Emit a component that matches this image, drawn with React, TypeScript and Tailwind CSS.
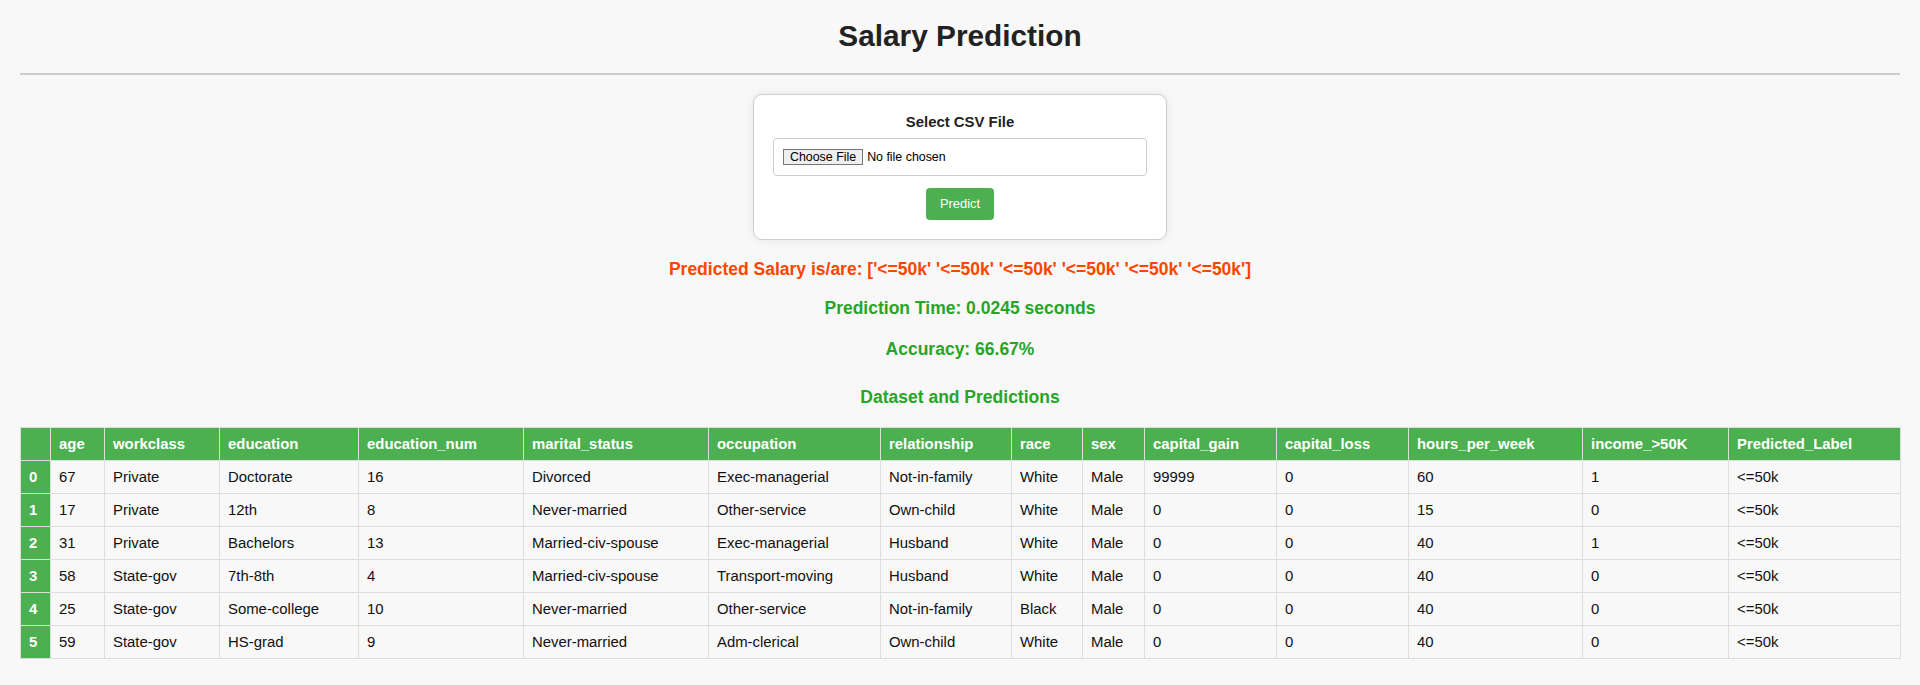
import React from 'react';

const columns = [
    { name: '', width: 'w-[30px]' },
    { name: 'age', width: 'w-[54px]' },
    { name: 'workclass', width: 'w-[115px]' },
    { name: 'education', width: 'w-[139px]' },
    { name: 'education_num', width: 'w-[165px]' },
    { name: 'marital_status', width: 'w-[185px]' },
    { name: 'occupation', width: 'w-[172px]' },
    { name: 'relationship', width: 'w-[131px]' },
    { name: 'race', width: 'w-[71px]' },
    { name: 'sex', width: 'w-[62px]' },
    { name: 'capital_gain', width: 'w-[132px]' },
    { name: 'capital_loss', width: 'w-[132px]' },
    { name: 'hours_per_week', width: 'w-[174px]' },
    { name: 'income_>50K', width: 'w-[146px]' },
    { name: 'Predicted_Label', width: 'w-[172px]' },
];

const rows = [
    ['67', 'Private', 'Doctorate', '16', 'Divorced', 'Exec-managerial', 'Not-in-family', 'White', 'Male', '99999', '0', '60', '1', '<=50k'],
    ['17', 'Private', '12th', '8', 'Never-married', 'Other-service', 'Own-child', 'White', 'Male', '0', '0', '15', '0', '<=50k'],
    ['31', 'Private', 'Bachelors', '13', 'Married-civ-spouse', 'Exec-managerial', 'Husband', 'White', 'Male', '0', '0', '40', '1', '<=50k'],
    ['58', 'State-gov', '7th-8th', '4', 'Married-civ-spouse', 'Transport-moving', 'Husband', 'White', 'Male', '0', '0', '40', '0', '<=50k'],
    ['25', 'State-gov', 'Some-college', '10', 'Never-married', 'Other-service', 'Not-in-family', 'Black', 'Male', '0', '0', '40', '0', '<=50k'],
    ['59', 'State-gov', 'HS-grad', '9', 'Never-married', 'Adm-clerical', 'Own-child', 'White', 'Male', '0', '0', '40', '0', '<=50k'],
];

function App() {
    return (
        <div className="min-h-screen bg-[#f8f8f8] pb-[20px] font-['Liberation_Sans',Arial,sans-serif] text-[#222]">
            <h1 className="pt-[19px] text-center text-[29.8px] font-bold leading-[34px]">Salary Prediction</h1>
            <div className="mx-[20px] mt-[20px] h-[2px] bg-[#cccccc]" />

            {/* upload card */}
            <div className="mx-auto mt-[19px] w-[414px] rounded-[9px] border border-[#d0d0d0] bg-white p-[19px] shadow-[0_0_10px_rgba(0,0,0,0.08)]">
                <div className="text-center text-[14.9px] font-bold leading-[17px]">Select CSV File</div>
                <div className="mt-[7px] flex h-[38px] items-center rounded-[4px] border border-[#cccccc] px-[9px] text-[12.4px] text-black">
                    <span className="border border-[#767676] bg-[#efefef] px-[6px] leading-[14px]">Choose File</span>
                    <span className="ml-[4px]">No file chosen</span>
                </div>
                <button className="mx-auto mt-[12px] block h-[32px] w-[68px] rounded-[4px] bg-[#4caf50] text-[12.9px] text-white">
                    Predict
                </button>
            </div>

            <div className="mt-[19px] text-center text-[17.5px] font-bold leading-[20px] text-[#ff4500]">
                Predicted Salary is/are: ['&lt;=50k' '&lt;=50k' '&lt;=50k' '&lt;=50k' '&lt;=50k' '&lt;=50k']
            </div>
            <div className="mt-[19px] text-center text-[17.5px] font-bold leading-[20px] text-[#28a428]">
                Prediction Time: 0.0245 seconds
            </div>
            <div className="mt-[21px] text-center text-[17.5px] font-bold leading-[20px] text-[#28a428]">
                Accuracy: 66.67%
            </div>
            <div className="mt-[28px] text-center text-[17.5px] font-bold leading-[20px] text-[#28a428]">
                Dataset and Predictions
            </div>

            {/* dataframe */}
            <div className="mt-[20px] px-[20px]">
                <table className="w-full table-fixed border-collapse text-left text-[14.9px] leading-[18px]">
                    <thead>
                        <tr>
                            {columns.map((col, i) => (
                                <th
                                    key={i}
                                    className={`${col.width} border border-[#dddddd] bg-[#4caf50] px-[8px] py-[7px] font-bold text-white`}
                                >
                                    {col.name}
                                </th>
                            ))}
                        </tr>
                    </thead>
                    <tbody>
                        {rows.map((row, r) => (
                            <tr key={r}>
                                <th className="border border-[#dddddd] bg-[#4caf50] px-[8px] py-[7px] font-bold text-white">{r}</th>
                                {row.map((cell, c) => (
                                    <td key={c} className="border border-[#dddddd] px-[8px] py-[7px] text-[#111]">
                                        {cell}
                                    </td>
                                ))}
                            </tr>
                        ))}
                    </tbody>
                </table>
            </div>
        </div>
    );
}

export default App;
